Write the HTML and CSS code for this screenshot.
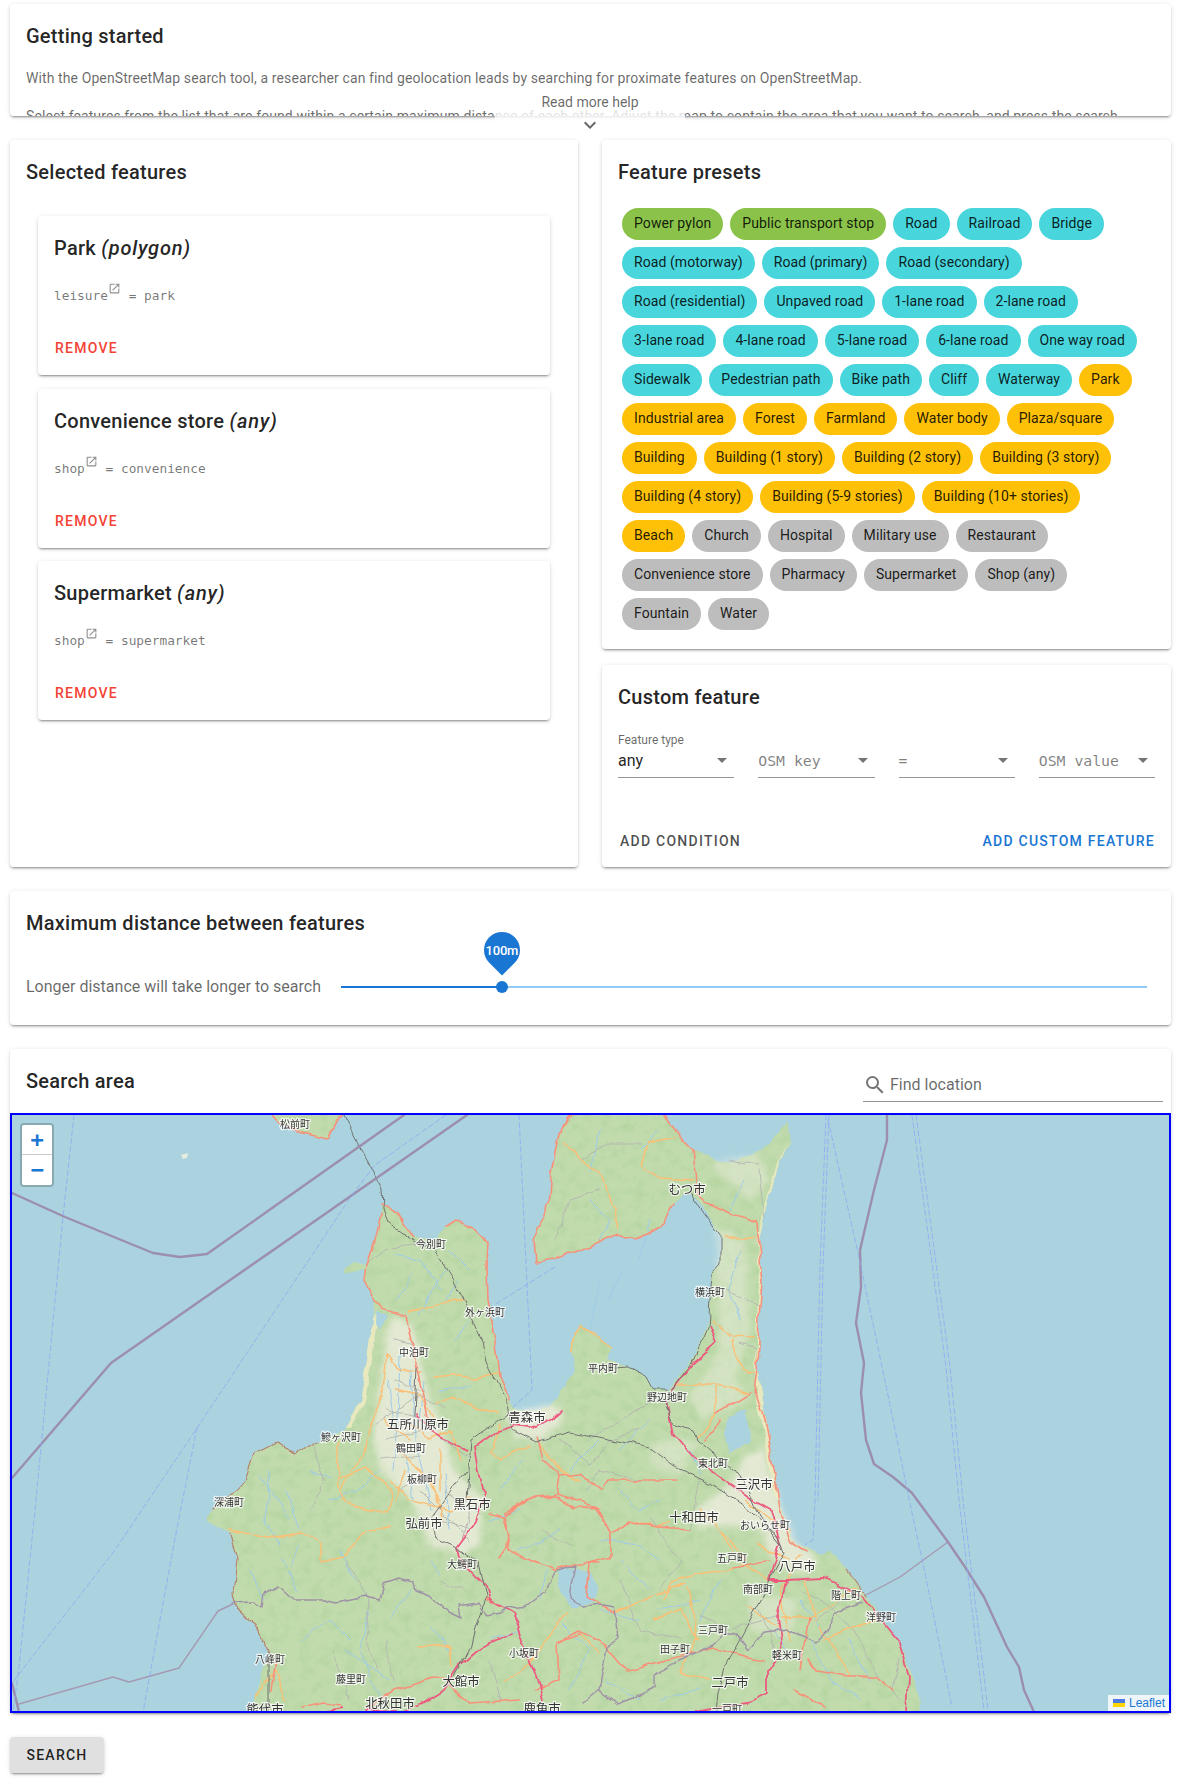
FILE: index.html
```html
<!DOCTYPE html>
<html lang="en">
<head>
<meta charset="utf-8">
<title>OpenStreetMap search</title>
<link rel="stylesheet" href="styles.css">
</head>
<body>
<main class="page">
  <section class="intro">
    <div class="card intro-card">
      <h2 class="title">Getting started</h2>
      <p class="intro-text">With the OpenStreetMap search tool, a researcher can find geolocation leads by searching for proximate features on OpenStreetMap.</p>
      <p class="intro-text">Select features from the list that are found within a certain maximum distance of each other. Adjust the map to contain the area that you want to search, and press the search button.</p>
    </div>
    <div class="more">
      <span class="more-label">Read more help</span>
      <svg class="chevron" viewBox="0 0 24 24"><path d="M7.41,8.58L12,13.17L16.59,8.58L18,10L12,16L6,10L7.41,8.58Z"/></svg>
    </div>
  </section>

  <section class="columns">
    <div class="card selected">
      <h2 class="title">Selected features</h2>
      <div class="selected-list">
        <article class="card feature">
          <h3 class="title">Park <em>(polygon)</em></h3>
          <p class="tag">leisure<svg class="ext" viewBox="0 0 24 24"><path d="M14,3V5H17.59L7.76,14.83L9.17,16.24L19,6.41V10H21V3M19,19H5V5H12V3H5C3.89,3 3,3.9 3,5V19A2,2 0 0,0 5,21H19A2,2 0 0,0 21,19V12H19V19Z"/></svg> = park</p>
          <div class="actions"><span class="btn red">Remove</span></div>
        </article>
        <article class="card feature">
          <h3 class="title">Convenience store <em>(any)</em></h3>
          <p class="tag">shop<svg class="ext" viewBox="0 0 24 24"><path d="M14,3V5H17.59L7.76,14.83L9.17,16.24L19,6.41V10H21V3M19,19H5V5H12V3H5C3.89,3 3,3.9 3,5V19A2,2 0 0,0 5,21H19A2,2 0 0,0 21,19V12H19V19Z"/></svg> = convenience</p>
          <div class="actions"><span class="btn red">Remove</span></div>
        </article>
        <article class="card feature">
          <h3 class="title">Supermarket <em>(any)</em></h3>
          <p class="tag">shop<svg class="ext" viewBox="0 0 24 24"><path d="M14,3V5H17.59L7.76,14.83L9.17,16.24L19,6.41V10H21V3M19,19H5V5H12V3H5C3.89,3 3,3.9 3,5V19A2,2 0 0,0 5,21H19A2,2 0 0,0 21,19V12H19V19Z"/></svg> = supermarket</p>
          <div class="actions"><span class="btn red">Remove</span></div>
        </article>
      </div>
    </div>

    <div class="side">
      <div class="card presets">
        <h2 class="title">Feature presets</h2>
        <div class="chips">
          <span class="chip green">Power pylon</span>
          <span class="chip green">Public transport stop</span>
          <span class="chip cyan">Road</span>
          <span class="chip cyan">Railroad</span>
          <span class="chip cyan">Bridge</span>
          <span class="chip cyan">Road (motorway)</span>
          <span class="chip cyan">Road (primary)</span>
          <span class="chip cyan">Road (secondary)</span>
          <span class="chip cyan">Road (residential)</span>
          <span class="chip cyan">Unpaved road</span>
          <span class="chip cyan">1-lane road</span>
          <span class="chip cyan">2-lane road</span>
          <span class="chip cyan">3-lane road</span>
          <span class="chip cyan">4-lane road</span>
          <span class="chip cyan">5-lane road</span>
          <span class="chip cyan">6-lane road</span>
          <span class="chip cyan">One way road</span>
          <span class="chip cyan">Sidewalk</span>
          <span class="chip cyan">Pedestrian path</span>
          <span class="chip cyan">Bike path</span>
          <span class="chip cyan">Cliff</span>
          <span class="chip cyan">Waterway</span>
          <span class="chip amber">Park</span>
          <span class="chip amber">Industrial area</span>
          <span class="chip amber">Forest</span>
          <span class="chip amber">Farmland</span>
          <span class="chip amber">Water body</span>
          <span class="chip amber">Plaza/square</span>
          <span class="chip amber">Building</span>
          <span class="chip amber">Building (1 story)</span>
          <span class="chip amber">Building (2 story)</span>
          <span class="chip amber">Building (3 story)</span>
          <span class="chip amber">Building (4 story)</span>
          <span class="chip amber">Building (5-9 stories)</span>
          <span class="chip amber">Building (10+ stories)</span>
          <span class="chip amber">Beach</span>
          <span class="chip grey">Church</span>
          <span class="chip grey">Hospital</span>
          <span class="chip grey">Military use</span>
          <span class="chip grey">Restaurant</span>
          <span class="chip grey">Convenience store</span>
          <span class="chip grey">Pharmacy</span>
          <span class="chip grey">Supermarket</span>
          <span class="chip grey">Shop (any)</span>
          <span class="chip grey">Fountain</span>
          <span class="chip grey">Water</span>
        </div>
      </div>

      <div class="card custom">
        <h2 class="title">Custom feature</h2>
        <div class="fields">
          <div class="field">
            <label class="field-label">Feature type</label>
            <div class="field-box"><span class="field-value">any</span><i class="arrow"></i></div>
          </div>
          <div class="field">
            <div class="field-box"><span class="field-mono">OSM key</span><i class="arrow"></i></div>
          </div>
          <div class="field">
            <div class="field-box"><span class="field-mono">=</span><i class="arrow"></i></div>
          </div>
          <div class="field">
            <div class="field-box"><span class="field-mono">OSM value</span><i class="arrow"></i></div>
          </div>
        </div>
        <div class="actions split">
          <span class="btn dark">Add condition</span>
          <span class="btn blue">Add custom feature</span>
        </div>
      </div>
    </div>
  </section>

  <section class="card distance">
    <h2 class="title">Maximum distance between features</h2>
    <div class="slider-row">
      <span class="slider-label">Longer distance will take longer to search</span>
      <div class="slider">
        <div class="track"></div>
        <div class="track-fill" style="width:20%"></div>
        <div class="thumb" style="left:20%"></div>
        <div class="pin" style="left:20%"><span class="pin-text">100m</span></div>
      </div>
    </div>
  </section>

  <section class="card area">
    <header class="area-head">
      <h2 class="title">Search area</h2>
      <div class="find">
        <svg class="find-icon" viewBox="0 0 24 24"><path d="M9.5,3A6.5,6.5 0 0,1 16,9.5C16,11.11 15.41,12.59 14.44,13.73L14.71,14H15.5L20.5,19L19,20.5L14,15.5V14.71L13.73,14.44C12.59,15.41 11.11,16 9.5,16A6.5,6.5 0 0,1 3,9.5A6.5,6.5 0 0,1 9.5,3M9.5,5C7,5 5,7 5,9.5C5,12 7,14 9.5,14C12,14 14,12 14,9.5C14,7 12,5 9.5,5Z"/></svg>
        <span class="find-text">Find location</span>
      </div>
    </header>
    <div class="map">
      <svg class="map-svg" viewBox="12 1115 1157 596" preserveAspectRatio="none">
        <defs>
          <filter id="landtex" filterUnits="userSpaceOnUse" x="12" y="1115" width="1157" height="596" color-interpolation-filters="sRGB">
            <feTurbulence type="fractalNoise" baseFrequency=".045" numOctaves="3" seed="4" result="n"/>
            <feDisplacementMap in="SourceGraphic" in2="n" scale="8" xChannelSelector="R" yChannelSelector="G" result="d"/>
            <feTurbulence type="fractalNoise" baseFrequency=".09" numOctaves="3" seed="11" result="m"/>
            <feColorMatrix in="m" type="matrix" values="0 0 0 0 .70  0 0 0 0 .83  0 0 0 0 .62  2 0 0 0 -.92" result="spots"/>
            <feComposite in="spots" in2="d" operator="in" result="s2"/>
            <feMerge><feMergeNode in="d"/><feMergeNode in="s2"/></feMerge>
          </filter>
          <filter id="wig" filterUnits="userSpaceOnUse" x="12" y="1115" width="1157" height="596" color-interpolation-filters="sRGB">
            <feTurbulence type="fractalNoise" baseFrequency=".045" numOctaves="3" seed="4" result="n"/>
            <feDisplacementMap in="SourceGraphic" in2="n" scale="8" xChannelSelector="R" yChannelSelector="G"/>
          </filter>
        </defs>
        <g filter="url(#landtex)">
          <path class="land" d="M272 1115 L279 1123 L295 1130 L327 1138 L334 1128 L341 1115 L341 1105 L272 1105 Z"/>
          <path class="land" d="M381 1205 L398 1215 L413 1237 L432 1243 L446 1227 L455 1221 L474 1228 L488 1242 L487 1267 L488 1300 L494 1333 L499 1377 L509 1400 L517 1408 L536 1412 L551 1407 L566 1383 L574 1370 L570 1347 L578 1325 L595 1333 L612 1350 L607 1360 L628 1367 L647 1377 L654 1390 L668 1390 L679 1377 L694 1357 L706 1327 L710 1307 L712 1273 L721 1263 L721 1237 L713 1223 L698 1200 L683 1193 L673 1203 L664 1223 L637 1240 L618 1233 L599 1242 L580 1250 L555 1260 L536 1263 L534 1240 L547 1213 L551 1173 L559 1133 L572 1115 L572 1105 L664 1105 L664 1115 L679 1135 L694 1150 L713 1158 L733 1162 L759 1150 L778 1133 L789 1123 L788 1143 L778 1167 L767 1207 L759 1240 L762 1283 L759 1317 L757 1367 L763 1400 L771 1450 L778 1500 L794 1540 L805 1546 L820 1555 L830 1552 L847 1570 L866 1597 L885 1623 L900 1647 L912 1677 L922 1700 L915 1725 L245 1725 L249 1712 L260 1683 L268 1653 L260 1630 L237 1610 L233 1593 L237 1560 L230 1533 L218 1528 L207 1523 L207 1517 L214 1508 L233 1493 L245 1480 L254 1453 L276 1442 L295 1455 L318 1442 L346 1428 L360 1400 L367 1360 L373 1313 L375 1300 L365 1280 L365 1270 L346 1272 L347 1265 L354 1263 L367 1267 L377 1233 L381 1213 Z"/>
        </g>
        <path class="islet" d="M181 1155 L188 1153 L187 1158 L183 1159 Z"/>
        <g filter="url(#wig)">
          <!-- built-up and farmland -->
          <path class="urban" d="M390 1318 L400 1316 L412 1325 L418 1350 L430 1400 L440 1420 L455 1470 L482 1500 L480 1545 L462 1555 L430 1545 L412 1500 L380 1470 L372 1430 L378 1400 L384 1360 Z"/>
          <path class="urban" d="M505 1412 L560 1405 L562 1425 L540 1442 L515 1438 Z"/>
          <path class="urban" d="M745 1455 L765 1445 L775 1490 L795 1540 L815 1557 L812 1572 L780 1572 L762 1530 L725 1525 L700 1528 L695 1510 L725 1490 Z"/>
          <path class="urban soft" d="M714 1160 L760 1153 L770 1180 L750 1200 L725 1180 Z"/>
          <path class="urban soft" d="M715 1225 L745 1240 L750 1330 L735 1380 L750 1400 L700 1420 L690 1395 L720 1350 Z"/>
          <path class="urban soft" d="M655 1440 L700 1440 L680 1475 L650 1465 Z"/>
          <path class="urban soft" d="M750 1590 L800 1600 L790 1640 L750 1630 Z"/>
          <path class="sand" d="M788 1140 L778 1167 L767 1207 L759 1240 L762 1283 L759 1317 L757 1367 L763 1400 L771 1450 L778 1500 L775 1500 L767 1450 L756 1400 L755 1367 L757 1317 L759 1283 L757 1240 L765 1207 L776 1167 Z"/>
          <path class="sand" d="M373 1313 L367 1360 L360 1400 L346 1428 L350 1428 L365 1400 L372 1360 L377 1320 Z"/>
          <!-- lakes -->
          <path class="water" d="M729 1417 L748 1407 L750 1443 L729 1452 L723 1433 Z"/>
          <path class="water" d="M559 1570 L574 1568 L592 1572 L598 1590 L594 1603 L570 1608 L558 1585 Z"/>
          <path class="water" d="M375 1310 L386 1316 L380 1330 L374 1325 Z"/>
          <!-- rivers -->
          <path class="river" d="M395 1300 L405 1290 L412 1270 M420 1315 L430 1290 L445 1270 M445 1300 L460 1280 M455 1340 L470 1320 M400 1355 L398 1420 L392 1470 M412 1370 L415 1440 L432 1510 M440 1390 L470 1385 M260 1475 L290 1520 M285 1490 L300 1530 M330 1500 L360 1490 L380 1470 M280 1560 L300 1590 M340 1550 L355 1580 M430 1560 L440 1575 M390 1620 L410 1590 M300 1640 L330 1620 L350 1640 M345 1650 L390 1680 M430 1625 L450 1650 M490 1520 L520 1510 M520 1550 L560 1530 M600 1540 L640 1545 L660 1560 M600 1610 L640 1620 M620 1270 L610 1300 M640 1260 L650 1220 M590 1200 L610 1220 L600 1240 M660 1130 L640 1150 M600 1130 L590 1170 M745 1180 L730 1210 M740 1250 L728 1290 L740 1320 M650 1420 L620 1450 M690 1450 L700 1475 M800 1600 L830 1640 M850 1640 L870 1680 M700 1600 L660 1610 M540 1600 L545 1570 M395 1255 L420 1260 L440 1290 M450 1250 L470 1270 M270 1470 L265 1520 L280 1545 M310 1470 L330 1480 M250 1570 L265 1600 M300 1545 L290 1575 M370 1610 L360 1650 L380 1700 M490 1640 L520 1630 M560 1620 L590 1650 L570 1690 M620 1560 L650 1590 M660 1500 L640 1510 L620 1490 M810 1640 L830 1680 L860 1700 M720 1580 L700 1620 M600 1440 L570 1470 M520 1460 L500 1490 M605 1680 L640 1700 M770 1630 L800 1660 M700 1690 L660 1700 M600 1280 L590 1330 M388 1380 L395 1430 M425 1380 L420 1420 M405 1450 L415 1500 M445 1475 L450 1530"/>
          <!-- minor roads -->
          <path class="minor" d="M367 1265 L385 1250 L405 1245 L430 1243 M375 1425 L420 1395 L445 1410 M385 1440 L430 1430 L470 1460 M420 1490 L470 1540 M315 1445 L322 1480 L310 1510 M440 1580 L462 1590 M346 1560 L370 1600 L366 1640 L378 1670 M332 1650 L350 1700 M395 1680 L385 1640 M560 1440 L590 1465 L610 1440 L640 1430 M580 1160 L605 1145 L640 1145 M555 1240 L570 1200 L600 1190 M730 1160 L760 1165 M760 1170 L765 1220 M725 1290 L760 1305 M740 1345 L755 1350 M590 1440 L620 1420 L655 1400 M700 1480 L690 1530 M640 1480 L600 1470 L585 1490 M800 1590 L830 1605 L860 1640 L880 1680 M700 1615 L730 1630 L780 1615 M760 1610 L775 1650 M840 1600 L815 1620 M898 1660 L892 1690 L900 1700 M395 1380 L425 1392 M385 1410 L425 1420 M440 1520 L470 1530 M470 1510 L462 1540 M650 1520 L680 1560 L660 1590 M620 1580 L640 1630 L680 1640 M540 1530 L570 1545 M490 1660 L500 1700 M395 1340 L412 1345 M380 1460 L420 1455 M400 1490 L430 1475 M445 1490 L480 1515"/>
          <!-- secondary roads -->
          <path class="second" d="M409 1313 L425 1307 L452 1298 L463 1300 M387 1353 L398 1370 L421 1372 M434 1377 L452 1375 L475 1378 L497 1373 M436 1403 L455 1397 L478 1408 L497 1413 M387 1353 L383 1390 L367 1433 L364 1453 L341 1490 M339 1443 L339 1487 L344 1503 L387 1513 L392 1490 L367 1467 L339 1480 M230 1530 L268 1538 L302 1533 L321 1543 L321 1562 L344 1557 L364 1533 L390 1525 M566 1143 L582 1160 L603 1177 L618 1227 M641 1167 L647 1143 L675 1137 M641 1167 L660 1178 L694 1180 M570 1350 L578 1327 L595 1333 L612 1350 M725 1237 L755 1237 M712 1320 L733 1337 L754 1338 M734 1340 L736 1357 L748 1372 L757 1370 M675 1385 L717 1385 L748 1393 M717 1385 L717 1413 L698 1437 M630 1520 L656 1528 L671 1523 M685 1583 L637 1603 L614 1613 M733 1567 L698 1573 L672 1583 L664 1600 M769 1580 L740 1563 M809 1617 L855 1587 M820 1627 L840 1657 L851 1677 M824 1640 L851 1627 L881 1620 M782 1617 L809 1617 M748 1607 L778 1627 M687 1587 L694 1613 L698 1637 L679 1673 L710 1680 M417 1647 L450 1645 L452 1667 M505 1683 L530 1663 L551 1630 L566 1613 M410 1425 L430 1440 L450 1430 L460 1460 M395 1445 L420 1470 L440 1500 M390 1480 L410 1500 L450 1510 L470 1495 M440 1450 L440 1490 M500 1425 L490 1450 L500 1460 L530 1445 M540 1445 L560 1470 L580 1480 M255 1697 L275 1670 L285 1700 M745 1500 L770 1520 L790 1530 M760 1545 L790 1560 M700 1510 L730 1540 L745 1560 M780 1590 L790 1640 M805 1580 L815 1620 M580 1633 L599 1653 M395 1390 L420 1395 L435 1420 M385 1420 L410 1440 M405 1470 L395 1500 M430 1480 L445 1520 M800 1555 L780 1590 M720 1530 L735 1555 M655 1620 L680 1610 L700 1640"/>
          <!-- primary roads -->
          <path class="primary" d="M272 1115 L279 1123 L295 1130 L327 1138 L334 1128 L341 1115 M381 1205 L398 1215 L413 1237 M446 1227 L455 1221 L474 1228 L488 1242 L487 1267 L488 1300 L494 1333 L499 1377 L509 1400 M381 1213 L377 1233 L367 1267 L365 1280 L375 1300 L385 1310 L405 1315 L410 1340 L418 1370 L425 1400 L428 1420 M572 1115 L559 1133 L551 1173 L547 1213 L534 1240 L536 1263 L555 1260 L580 1250 L599 1242 L618 1233 L637 1240 L664 1223 L673 1203 M664 1115 L679 1135 L694 1150 L698 1195 L706 1203 L733 1214 L757 1222 L760 1260 L762 1283 L759 1317 L757 1367 L754 1393 L763 1410 L771 1450 L780 1510 L790 1540 L805 1550 M750 1393 L717 1413 M537 1438 L543 1457 L560 1475 L557 1495 L573 1500 L597 1507 L610 1533 L610 1557 L591 1563 L588 1597 L614 1613 M557 1495 L535 1497 L503 1517 L490 1513 M503 1517 L508 1533 L507 1547 L500 1557 M560 1475 L580 1473 L603 1490 L610 1480 L637 1480 L675 1480 M580 1507 L595 1507 L610 1533 M612 1533 L630 1520 L637 1523 L656 1528 L690 1530 M505 1513 L534 1498 L555 1497 L574 1507 L600 1508 M505 1513 L509 1550 L536 1563 L555 1570 L578 1563 L600 1563 M557 1643 L578 1630 L600 1640 L626 1670 L656 1663 L713 1647 L731 1653 L763 1660 M559 1680 L536 1690 M580 1633 L557 1643 L559 1680 M809 1660 L816 1672 L847 1677 L877 1677 L893 1690 M794 1690 L824 1707 M367 1708 L394 1690 L432 1677 L444 1680 L470 1703 L520 1700 M302 1708 L325 1703 L344 1705 M733 1567 L769 1560 M486 1598 L501 1607 M705 1440 L720 1420 M800 1670 L809 1617 M270 1690 L275 1660"/>
          <path class="coastroad" d="M268 1653 L260 1630 L237 1610 L233 1593 L237 1560 L230 1533 M214 1508 L233 1493 L245 1480 L254 1453 L276 1442 L295 1455 L318 1442 M847 1570 L866 1597"/>
          <!-- motorways -->
          <path class="motor" d="M513 1427 L494 1433 L475 1447 L478 1467 L484 1493 L475 1523 L457 1547 L459 1557 L486 1587 L490 1600 L513 1613 L522 1640 L536 1677 L543 1700 M467 1452 L432 1432 L417 1415 M513 1425 L536 1428 L551 1420 L562 1410 M513 1633 L482 1647 L459 1667 L444 1690 L425 1702 L402 1712 M710 1325 L717 1343 L694 1363 L671 1390 M666 1400 L673 1433 L694 1458 L748 1497 L771 1510 L780 1543 L769 1580 M786 1580 L778 1617 L782 1650 L767 1673 L767 1693 L748 1703 L694 1712 M769 1580 L786 1580 L824 1578 L862 1597 L897 1640 L908 1677 L906 1712 M320 1712 L345 1708 M395 1712 L365 1710"/>
          <!-- rail -->
          <path class="rail" d="M342 1115 L367 1160 L382 1190 L383 1210 L388 1223 L415 1242 L434 1250 L455 1283 L482 1340 L486 1363 L509 1407 L511 1430 L536 1443 L570 1432 L600 1437 L649 1448 L672 1465 L713 1485 L744 1507 L778 1537 L784 1553 L771 1577 L763 1597 L725 1667 L719 1693 L717 1712 M689 1193 L721 1237 L721 1263 L712 1273 L708 1327 L694 1360 L671 1390 L666 1407 L673 1423 L694 1430 L698 1440 L733 1470 L748 1490 L759 1517 L782 1547 M467 1470 L432 1517 L436 1540 L459 1550 L478 1563 L486 1597 L475 1627 L471 1647 L455 1677 M511 1412 L490 1427 L471 1440 L467 1500 M415 1417 L417 1367 M590 1370 L628 1367 L647 1377 L654 1390 L668 1390 M268 1653 L268 1712"/>
          <!-- land boundaries -->
          <path class="border" d="M233 1603 L253 1602 L262 1608 L264 1592 L279 1585 L295 1600 L325 1600 L335 1603 L367 1597 L379 1600 L383 1583 L398 1578 L413 1582 L415 1592 L431 1597 L448 1613 L461 1619 L459 1605 L478 1602 L486 1616 L501 1613 L507 1607 L522 1610 L545 1592 L555 1572 L576 1565 L570 1598 L582 1607 L603 1605 L614 1607 L618 1640 L607 1647 L599 1690 L618 1705 L656 1687 L656 1675 L679 1660 L713 1645 L725 1633 L736 1633 L748 1650 L763 1633 L786 1630 L816 1643 L832 1627 L834 1613 L862 1603 M583 1703 L599 1690"/>
        </g>
        <!-- sea boundaries and ferry routes -->
        <path class="sea-thin" d="M233 1604 L218 1611 L179 1668 L129 1682 L113 1677 L19 1704 M948 1542 L900 1577 L866 1595"/>
        <path class="sea-thick" d="M12 1193 L65 1217 L153 1253 L180 1257 L207 1254 L404 1115 M467 1115 L111 1363 L12 1478 M887 1115 L887 1140 L874 1190 L860 1250 L861 1287 L856 1323 L864 1363 L861 1393 L866 1440 L874 1464 L893 1477 L912 1493 L948 1542 L965 1567 L984 1597 L1007 1647 L1019 1667 L1024 1690 L1034 1712 M12 1683 L19 1712"/>
        <path class="ferry" d="M74 1115 L63 1217 L36 1500 L19 1667 L13 1712 M446 1115 L375 1165 L352 1195 L197 1428 L115 1550 L12 1683 M197 1428 L176 1533 L143 1712 M519 1115 L532 1390 L513 1407 M555 1267 L494 1305 M826 1115 L820 1267 L815 1500 L813 1540 L805 1545 M829 1115 L823 1267 L818 1500 M828 1120 L858 1253 L889 1400 L912 1513 L925 1573 L952 1707 M912 1115 L946 1367 L959 1500 L984 1710 M916 1115 L950 1367 L963 1500 L988 1710"/>
        <!-- labels -->
        <text class="lbl" x="295" y="1123">松前町</text>
        <text class="lbl" x="431" y="1243">今別町</text>
        <text class="lbl" x="485" y="1311">外ヶ浜町</text>
        <text class="lbl" x="414" y="1351">中泊町</text>
        <text class="lbl big" x="418" y="1424">五所川原市</text>
        <text class="lbl big" x="527" y="1417">青森市</text>
        <text class="lbl" x="341" y="1436">鰺ヶ沢町</text>
        <text class="lbl" x="411" y="1447">鶴田町</text>
        <text class="lbl" x="422" y="1478">板柳町</text>
        <text class="lbl" x="603" y="1367">平内町</text>
        <text class="lbl" x="229" y="1501">深浦町</text>
        <text class="lbl big" x="472" y="1504">黒石市</text>
        <text class="lbl big" x="424" y="1523">弘前市</text>
        <text class="lbl" x="462" y="1563">大鰐町</text>
        <text class="lbl" x="270" y="1658">八峰町</text>
        <text class="lbl" x="351" y="1678">藤里町</text>
        <text class="lbl" x="524" y="1652">小坂町</text>
        <text class="lbl big" x="461" y="1681">大館市</text>
        <text class="lbl big" x="390" y="1703">北秋田市</text>
        <text class="lbl big" x="265" y="1709">能代市</text>
        <text class="lbl big" x="542" y="1708">鹿角市</text>
        <text class="lbl big" x="687" y="1189">むつ市</text>
        <text class="lbl" x="710" y="1291">横浜町</text>
        <text class="lbl" x="667" y="1396">野辺地町</text>
        <text class="lbl" x="713" y="1462">東北町</text>
        <text class="lbl big" x="754" y="1484">三沢市</text>
        <text class="lbl big" x="694" y="1517">十和田市</text>
        <text class="lbl" x="765" y="1524">おいらせ町</text>
        <text class="lbl" x="732" y="1557">五戸町</text>
        <text class="lbl big" x="797" y="1566">八戸市</text>
        <text class="lbl" x="758" y="1588">南部町</text>
        <text class="lbl" x="846" y="1594">階上町</text>
        <text class="lbl" x="881" y="1616">洋野町</text>
        <text class="lbl" x="713" y="1629">三戸町</text>
        <text class="lbl" x="675" y="1648">田子町</text>
        <text class="lbl" x="787" y="1654">軽米町</text>
        <text class="lbl big" x="730" y="1682">二戸市</text>
        <text class="lbl" x="727" y="1708">一戸町</text>
      </svg>
      <div class="zoom">
        <span class="zoom-btn">+</span>
        <span class="zoom-btn">−</span>
      </div>
      <div class="attribution">
        <svg class="flag" viewBox="0 0 12 8"><rect width="12" height="4" class="flag-top"/><rect y="4" width="12" height="4" class="flag-bottom"/></svg>
        <span class="attr-link">Leaflet</span>
      </div>
    </div>
  </section>

  <div class="search-row"><span class="btn search">Search</span></div>
</main>
</body>
</html>
```

FILE: styles.css
```css
* { box-sizing: border-box; }
html, body { margin: 0; background: #fff; }
body { font-family: Roboto, "Noto Sans", sans-serif; color: rgba(0,0,0,.87); }

.page { display: flex; flex-direction: column; gap: 24px; padding: 4px 7px 12px 10px; }

.card {
  background: #fff;
  border-radius: 4px;
  box-shadow: 0 3px 1px -2px rgba(0,0,0,.2), 0 2px 2px 0 rgba(0,0,0,.14), 0 1px 5px 0 rgba(0,0,0,.12);
}

.title {
  margin: 0;
  padding: 16px 16px 0;
  font-size: 20px;
  line-height: 32px;
  font-weight: 500;
  letter-spacing: .0125em;
}
.title em { font-style: italic; }
.feature .title em { letter-spacing: .04em; }

/* intro */
.intro { position: relative; }
.intro-card { height: 112px; overflow: hidden; }
.intro-text {
  margin: 15px 16px 16px;
  font-size: 14px;
  line-height: 22px;
  letter-spacing: .0071em;
  color: rgba(0,0,0,.6);
}
.more {
  position: absolute;
  left: 485px;
  top: 86px;
  width: 190px;
  height: 40px;
  display: flex;
  flex-direction: column;
  align-items: center;
  background: linear-gradient(rgba(255,255,255,.35), rgba(255,255,255,.8) 40%);
}
.more-label { font-size: 14px; line-height: 22px; color: rgba(0,0,0,.6); margin-top: 1px; }
.chevron { width: 24px; height: 24px; margin-top: 0; fill: rgba(0,0,0,.6); flex: none; }

/* columns */
.columns { display: grid; grid-template-columns: 568px 569px; gap: 24px; }
.side { display: flex; flex-direction: column; gap: 16px; }

.selected-list { display: flex; flex-direction: column; gap: 13.5px; padding: 28px; }
.feature { height: 159px; display: flex; flex-direction: column; }
.tag {
  margin: 18px 16px 0;
  font-family: "DejaVu Sans Mono", monospace;
  font-size: 12.8px;
  line-height: 22px;
  color: rgba(0,0,0,.55);
}
.ext { width: 13px; height: 13px; fill: rgba(0,0,0,.45); vertical-align: 5px; }

.actions { margin-top: auto; padding: 8px; display: flex; }
.actions.split { justify-content: space-between; }
.feature .actions { padding: 8px 8px 9px 9px; }
.btn {
  display: inline-flex;
  align-items: center;
  height: 36px;
  padding: 0 8px;
  font-size: 14px;
  font-weight: 500;
  letter-spacing: .0893em;
  text-transform: uppercase;
}
.red { color: #f44336; }
.blue { color: #1976d2; }
.dark { color: rgba(0,0,0,.7); margin-left: 2px; }

/* presets */
.presets { height: 509px; }
.chips { display: flex; flex-wrap: wrap; gap: 7px; padding: 20px 26px 0 20px; }
.chip {
  height: 32px;
  line-height: 31px;
  padding: 0 12px;
  border-radius: 16px;
  font-size: 14px;
  letter-spacing: .08px;
  white-space: nowrap;
  color: rgba(0,0,0,.87);
}
.green { background: #8bc34a; }
.cyan { background: #48d5dc; }
.amber { background: #ffc107; }
.grey { background: #bdbdbd; }

/* custom */
.custom { height: 202px; display: flex; flex-direction: column; }
.fields { display: flex; align-items: flex-end; gap: 24px; padding: 19px 16px 0; }
.field { flex: 1; min-width: 0; }
.field-label { display: block; font-size: 12px; line-height: 16px; color: rgba(0,0,0,.6); }
.field-box {
  display: flex;
  align-items: center;
  justify-content: space-between;
  height: 30px;
  padding: 1px 7px 5px 0;
  border-bottom: 1px solid rgba(0,0,0,.42);
}
.field-value { font-size: 16px; line-height: 24px; }
.field-mono { font-family: "DejaVu Sans Mono", monospace; font-size: 14.8px; line-height: 24px; color: rgba(0,0,0,.5); }
.arrow { width: 0; height: 0; border: 5px solid transparent; border-top-color: rgba(0,0,0,.54); border-bottom-width: 0; }

/* slider */
.distance { padding-bottom: 27px; }
.slider-row { display: flex; align-items: center; gap: 20px; height: 24px; margin-top: 35px; padding: 0 24px 0 16px; }
.slider-label { margin-top: 2px; font-size: 16px; line-height: 24px; color: rgba(0,0,0,.6); white-space: nowrap; }
.slider { position: relative; flex: 1; height: 24px; }
.track, .track-fill { position: absolute; left: 0; top: 12px; height: 2px; }
.track { right: 0; background: #90caf9; }
.track-fill { background: #1976d2; }
.thumb {
  position: absolute;
  top: 7px;
  width: 12px;
  height: 12px;
  margin-left: -6px;
  border-radius: 50%;
  background: #1976d2;
}
.pin {
  position: absolute;
  top: -42px;
  width: 36px;
  height: 36px;
  margin-left: -18px;
  border-radius: 50% 50% 0 50%;
  background: #1976d2;
  transform: rotate(45deg);
  display: flex;
  align-items: center;
  justify-content: center;
}
.pin-text { transform: rotate(-45deg); color: #fff; font-size: 13px; line-height: 1; font-weight: 500; letter-spacing: -.2px; }

/* search area */
.area-head { display: flex; justify-content: space-between; align-items: flex-start; height: 64px; }
.area-head .title { padding-right: 0; }
.find {
  display: flex;
  align-items: center;
  width: 300px;
  height: 29px;
  margin: 24px 8px 0 0;
  padding-bottom: 4px;
  border-bottom: 1px solid rgba(0,0,0,.42);
}
.find-icon { width: 24px; height: 24px; fill: rgba(0,0,0,.54); flex: none; }
.find-text { margin-left: 3px; font-size: 16px; line-height: 24px; color: rgba(0,0,0,.6); }

.map {
  position: relative;
  height: 600px;
  border: 2px solid #0000ff;
  background: #aad3df;
  overflow: hidden;
}
.map-svg { display: block; width: 100%; height: 100%; }

.land { fill: #c1dbad; }
.islet { fill: #e6ece0; }
.urban { fill: #f1efe3; opacity: .72; filter: blur(3px); }
.urban.soft { opacity: .4; }
.sand { fill: #f1ecc4; opacity: .8; }
.water { fill: #aad3df; }

.river, .minor, .second, .primary, .coastroad, .motor, .rail, .border, .sea-thin, .sea-thick, .ferry {
  fill: none;
  stroke-linejoin: round;
  stroke-linecap: round;
}
.river { stroke: #9fcbe8; stroke-width: 1; }
.minor { stroke: #b3b5b1; stroke-width: .9; }
.second { stroke: #fbbf75; stroke-width: 1.4; }
.primary { stroke: #f8917a; stroke-width: 1.6; }
.coastroad { stroke: #b5806a; stroke-width: 1.1; }
.motor { stroke: #ec5a80; stroke-width: 1.8; }
.rail { stroke: #727272; stroke-width: 1; }
.border { stroke: #9f92a6; stroke-width: 1.4; }
.sea-thin { stroke: #a599b5; stroke-width: 1.4; }
.sea-thick { stroke: #9c8fae; stroke-width: 2.4; }
.ferry { stroke: #8fa8f2; stroke-width: .8; stroke-dasharray: 5 3; }

.lbl {
  font-family: "Noto Sans CJK JP", sans-serif;
  font-size: 10px;
  fill: #333;
  text-anchor: middle;
  dominant-baseline: central;
  paint-order: stroke;
  stroke: rgba(255,255,255,.75);
  stroke-width: 2.4px;
}
.lbl.big { font-size: 12.4px; }

.zoom {
  position: absolute;
  left: 8px;
  top: 8px;
  display: flex;
  flex-direction: column;
  border: 2px solid rgba(0,0,0,.2);
  border-radius: 4px;
  background-clip: padding-box;
}
.zoom-btn {
  width: 30px;
  height: 30px;
  background: #fff;
  color: #1976d2;
  font-family: "DejaVu Sans Mono", monospace;
  font-weight: 700;
  font-size: 22px;
  line-height: 30px;
  text-align: center;
}
.zoom-btn:first-child { border-bottom: 1px solid #ccc; border-radius: 2px 2px 0 0; }
.zoom-btn:last-child { border-radius: 0 0 2px 2px; }

.attribution {
  position: absolute;
  right: 0;
  bottom: 0;
  display: flex;
  align-items: center;
  gap: 4px;
  height: 16px;
  padding: 0 4px 0 5px;
  background: rgba(255,255,255,.8);
}
.flag { width: 12px; height: 8px; }
.flag-top { fill: #4c7be1; }
.flag-bottom { fill: #ffd500; }
.attr-link { font-family: "Liberation Sans", Arial, sans-serif; font-size: 12px; color: #1976d2; }

.search-row { display: flex; }
.search {
  width: 94px;
  padding: 0;
  justify-content: center;
  background: #e0e0e0;
  border-radius: 4px;
  box-shadow: 0 3px 1px -2px rgba(0,0,0,.2), 0 2px 2px 0 rgba(0,0,0,.14), 0 1px 5px 0 rgba(0,0,0,.12);
}
```
